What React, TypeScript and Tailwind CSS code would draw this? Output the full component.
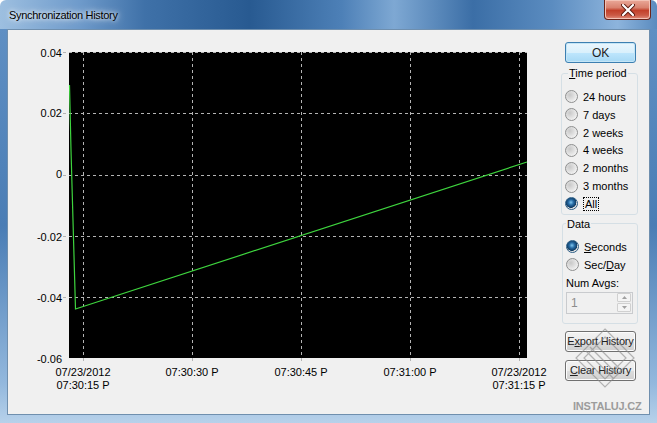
import React from "react";

const font = "font-['Liberation_Sans',Arial,sans-serif]";

const yTicks = [
  { v: "0.04", y: 52, b: 57 },
  { v: "0.02", y: 113, b: 117 },
  { v: "0", y: 175, b: 178 },
  { v: "-0.02", y: 236, b: 241 },
  { v: "-0.04", y: 297, b: 302 },
  { v: "-0.06", y: 358, b: 363 },
];

const xTicks = [
  { x: 83, l1: "07/23/2012", l2: "07:30:15 P" },
  { x: 192, l1: "07:30:30 P" },
  { x: 301, l1: "07:30:45 P" },
  { x: 410, l1: "07:31:00 P" },
  { x: 519, l1: "07/23/2012", l2: "07:31:15 P" },
];

function Chart() {
  return (
    <svg width={553} height={384} viewBox="8 30 553 384" className="shrink-0">
      <rect x={69} y={52} width={458} height={306} fill="#000" />
      {yTicks.map((t) => (
        <g key={t.v}>
          {t.y < 358 && (
            <line x1={63} y1={t.y + 0.5} x2={527} y2={t.y + 0.5} stroke="#b4b4b4" strokeDasharray="3 3" />
          )}
          <text x={62} y={t.b} textAnchor="end" fontFamily="Liberation Sans, Arial, sans-serif" fontSize={11} fill="#000">
            {t.v}
          </text>
        </g>
      ))}
      {xTicks.map((t) => (
        <g key={t.x}>
          <line x1={t.x + 0.5} y1={52} x2={t.x + 0.5} y2={364} stroke="#b4b4b4" strokeDasharray="3 3" />
          <text x={t.x} y={376} textAnchor="middle" fontFamily="Liberation Sans, Arial, sans-serif" fontSize={11} fill="#000">
            {t.l1}
          </text>
          {t.l2 && (
            <text x={t.x} y={389} textAnchor="middle" fontFamily="Liberation Sans, Arial, sans-serif" fontSize={11} fill="#000">
              {t.l2}
            </text>
          )}
        </g>
      ))}
      <polyline points="69.5,85 71,150 75.5,309 527,162" fill="none" stroke="#3ed43e" strokeWidth={1.2} />
    </svg>
  );
}

function Radio({ label, checked, focus }: { label: React.ReactNode; checked?: boolean; focus?: boolean }) {
  return (
    <div className="flex h-[17.83px] items-center gap-[5px] pl-[3px]">
      <span
        className={
          checked
            ? "h-[13px] w-[13px] shrink-0 rounded-full border border-[#2c5e86] bg-[radial-gradient(circle_at_45%_40%,#7fc6ee_0%,#2569a3_30%,#103a60_58%,#dcdcdc_63%,#ffffff_100%)]"
            : "h-[13px] w-[13px] shrink-0 rounded-full border border-[#8e8f8f] bg-[radial-gradient(circle_at_35%_35%,#c8c8c8_0%,#dedede_40%,#f4f4f4_80%,#ffffff_100%)]"
        }
      />
      <span className={focus ? "border border-dotted border-black px-[1px] leading-[12px]" : "leading-[12px]"}>{label}</span>
    </div>
  );
}

function WinButton({ children, def }: { children: React.ReactNode; def?: boolean }) {
  return (
    <div
      className={
        "ml-[4px] flex h-[21px] w-[71px] items-center justify-center rounded-[3px] border text-[11px] tracking-[-0.2px] text-[#222] " +
        (def
          ? "border-[#3c7fb1] bg-[linear-gradient(#eaf6fd_0%,#d9f0fc_50%,#bee6fd_51%,#a7d9f5_100%)] shadow-[inset_0_0_0_1px_#c4e5f6]"
          : "border-[#707070] bg-[linear-gradient(#f2f2f2_0%,#ebebeb_50%,#dddddd_51%,#cfcfcf_100%)] shadow-[inset_0_0_0_1px_#fcfcfc]")
      }
    >
      {children}
    </div>
  );
}

function Panel() {
  return (
    <div className="flex w-[88px] flex-col text-[11px] text-black">
      <div className="mt-[12px]">
        <WinButton def>
          <span className="text-[12px]">OK</span>
        </WinButton>
      </div>

      <fieldset className="mt-[3px] w-[77px] rounded-[3px] border border-[#d5dfe5] pb-[1px] pt-[8px]">
        <legend className="ml-[6px] px-[1px] leading-[14px]">
          <span className="underline">T</span>ime period
        </legend>
        <Radio label="24 hours" />
        <Radio label="7 days" />
        <Radio label="2 weeks" />
        <Radio label="4 weeks" />
        <Radio label="2 months" />
        <Radio label="3 months" />
        <Radio label="All" checked focus />
      </fieldset>

      <fieldset className="ml-[1px] mt-[2px] w-[76px] rounded-[3px] border border-[#d5dfe5] pb-[9px] pt-[7px]">
        <legend className="ml-[3px] px-[1px] leading-[14px]">Data</legend>
        <div className="flex h-[18px] items-center">
          <Radio
            checked
            label={
              <>
                <span className="underline">S</span>econds
              </>
            }
          />
        </div>
        <div className="flex h-[18px] items-center">
          <Radio
            label={
              <>
                Sec/<span className="underline">D</span>ay
              </>
            }
          />
        </div>
        <div className="flex h-[18px] items-center pl-[3px]">Num Avgs:</div>
        <div className="ml-[3px] flex h-[22px] w-[67px] items-center justify-between border border-[#c9cbce] bg-[#f0f0f0] pl-[4px] pr-[1px]">
          <span className="text-[12px] text-[#8d8d8d]">1</span>
          <div className="flex flex-col gap-[1px]">
            <div className="flex h-[9px] w-[14px] items-center justify-center rounded-[1px] border border-[#d0d0d0] bg-[#f4f4f4]">
              <svg width="5" height="3" viewBox="0 0 5 3">
                <path d="M0 3 L2.5 0 L5 3 Z" fill="#a0a0a0" />
              </svg>
            </div>
            <div className="flex h-[9px] w-[14px] items-center justify-center rounded-[1px] border border-[#d0d0d0] bg-[#f4f4f4]">
              <svg width="5" height="3" viewBox="0 0 5 3">
                <path d="M0 0 L2.5 3 L5 0 Z" fill="#a0a0a0" />
              </svg>
            </div>
          </div>
        </div>
      </fieldset>

      <div className="mt-[7px]">
        <WinButton>
          <span>
            E<span className="underline">x</span>port History
          </span>
        </WinButton>
      </div>
      <div className="mt-[8px]">
        <WinButton>
          <span>
            <span className="underline">C</span>lear History
          </span>
        </WinButton>
      </div>
    </div>
  );
}

export default function App() {
  return (
    <div
      className={
        font +
        " relative flex h-[423px] w-[657px] flex-col overflow-hidden rounded-t-[6px] bg-[linear-gradient(90deg,#9dbfe0_0%,#6f9bcb_12%,#3f71a8_22%,#285a91_38%,#4d80b7_52%,#7ea8d3_60%,#3b6ea6_72%,#5b8cc0_84%,#8db4dc_94%,#5a8bbf_100%)]"
      }
    >
      {/* title bar */}
      <div className="flex h-[29px] shrink-0 items-start justify-between">
        <div className="pl-[9px] pt-[8px] text-[11px] leading-[14px] tracking-[-0.3px] text-black [text-shadow:0_0_8px_#ffffff,0_0_4px_#ffffff]">
          Synchronization History
        </div>
        <div className="mr-[6px] flex h-[20px] w-[47px] items-center justify-center rounded-b-[4px] border border-t-0 border-[#6b2419] bg-[linear-gradient(#eaa999_0%,#d9826f_40%,#c2402a_55%,#cb5a45_80%,#e08f7e_100%)] shadow-[inset_0_0_0_1px_#f3c3b6]">
          <svg width="14" height="12" viewBox="0 0 14 12">
            <path d="M2 1 L12 11 M12 1 L2 11" stroke="#5a1a10" strokeWidth="4" strokeLinecap="round" />
            <path d="M2 1 L12 11 M12 1 L2 11" stroke="#ffffff" strokeWidth="2.2" strokeLinecap="round" />
          </svg>
        </div>
      </div>

      {/* frame + client */}
      <div className="flex flex-1 bg-[linear-gradient(#5f8fc3_0%,#4a7db5_50%,#93b8dd_90%,#b7d1ea_100%)] px-[7px] pb-[8px]">
        <div className="flex flex-1 border border-[#6f8fae] bg-[#f0f0f0]">
          <Chart />
          <Panel />
        </div>
      </div>

      {/* watermark */}
      <svg
        className="pointer-events-none absolute left-[570px] top-[325px] opacity-60"
        width="70"
        height="80"
        viewBox="0 0 70 80"
      >
        <g fill="none" stroke="#8a8a8a" strokeWidth="1.2">
          <path d="M35 4 L64 33 L35 62 L6 33 Z" />
          <path d="M35 12 L56 33 L35 54 L14 33 Z" />
          <path d="M20 22 L48 50" />
          <path d="M24 18 L52 46" />
          <path d="M16 26 L44 54" />
        </g>
      </svg>
      <div className="pointer-events-none absolute left-[573px] top-[398px] text-[11px] font-bold tracking-[-0.2px] text-[#9c9c9c]">
        INSTALUJ.CZ
      </div>
    </div>
  );
}
